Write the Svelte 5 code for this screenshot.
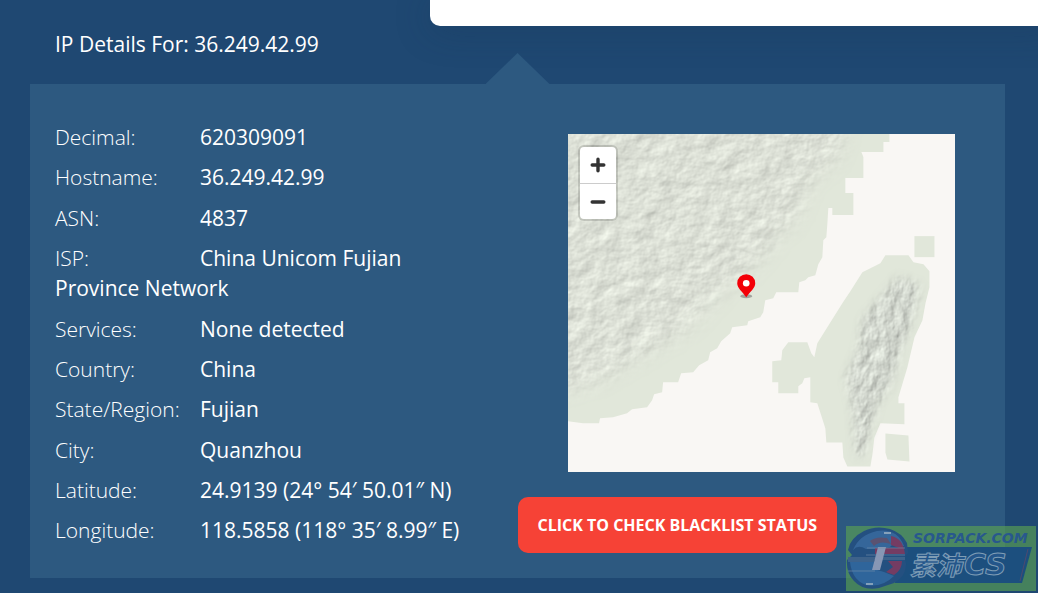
<script>
  const details = [
    ['Decimal', '620309091'],
    ['Hostname', '36.249.42.99'],
    ['ASN', '4837'],
    ['ISP', 'China Unicom Fujian Province Network'],
    ['Services', 'None detected'],
    ['Country', 'China'],
    ['State/Region', 'Fujian'],
    ['City', 'Quanzhou'],
    ['Latitude', '24.9139 (24° 54′ 50.01″ N)'],
    ['Longitude', '118.5858 (118° 35′ 8.99″ E)']
  ];
</script>

<main class="page">
  <div class="card"></div>
  <h1>IP Details For: 36.249.42.99</h1>

  <section class="panel">
    <ul class="details">
      {#each details as [label, value]}
        <li><span class="label">{label}:</span>{value}</li>
      {/each}
    </ul>

    <div class="side">
      <div class="map">
        <svg class="terrain" viewBox="0 0 387 338" preserveAspectRatio="xMidYMid slice" aria-hidden="true">
          <defs>
            <filter id="relief" x="0" y="0" width="387" height="338" filterUnits="userSpaceOnUse" color-interpolation-filters="sRGB">
              <feTurbulence type="fractalNoise" baseFrequency="0.05 0.06" numOctaves="4" seed="12" result="n" />
              <feColorMatrix in="n" type="matrix" values="0 0 0 0 0  0 0 0 0 0  0 0 0 0 0  1 0 0 0 0" result="h" />
              <feDiffuseLighting in="h" surfaceScale="0.8" diffuseConstant="1.25" lighting-color="#dfe3d9" result="lit">
                <feDistantLight azimuth="225" elevation="52" />
              </feDiffuseLighting>
              <feComposite in="lit" in2="SourceAlpha" operator="in" />
            </filter>
            <filter id="ridge" x="240" y="110" width="147" height="228" filterUnits="userSpaceOnUse" color-interpolation-filters="sRGB">
              <feTurbulence type="fractalNoise" baseFrequency="0.08 0.05" numOctaves="4" seed="5" result="n" />
              <feColorMatrix in="n" type="matrix" values="0 0 0 0 0  0 0 0 0 0  0 0 0 0 0  1 0 0 0 0" result="h" />
              <feDiffuseLighting in="h" surfaceScale="1.2" diffuseConstant="1.22" lighting-color="#dadfd6" result="lit">
                <feDistantLight azimuth="225" elevation="52" />
              </feDiffuseLighting>
              <feComposite in="lit" in2="SourceAlpha" operator="in" />
            </filter>
            <filter id="soft" x="-10%" y="-10%" width="120%" height="120%"><feGaussianBlur stdDeviation="9" /></filter>
            <filter id="softer" x="-20%" y="-10%" width="140%" height="120%"><feGaussianBlur stdDeviation="4" /></filter>
            <mask id="inland" maskUnits="userSpaceOnUse" x="0" y="0" width="387" height="338">
              <path filter="url(#soft)" fill="#fff" d="M-30-30H285L270 25 242 50 228 85 205 110 188 132 162 152 140 174 118 197 95 210 52 236 25 250-30 262Z" />
            </mask>
            <mask id="range" maskUnits="userSpaceOnUse" x="240" y="110" width="147" height="228">
              <path filter="url(#softer)" fill="#fff" d="M330 142 352 150 346 180 334 215 323 250 310 270 301 300 295 322H287L284 275 277 245 289 215 294 185 310 165Z" />
            </mask>
          </defs>
          <rect width="387" height="338" fill="#f9f7f4" />
          <g fill="#e1e7da">
            <path d="M0 0H321V8H315V18H293L295 23V44H277V59H285V81H264V74H260L259 90 258 103 255 106 254 123 250 130 247 141 240 143 237 146 231 148 230 158H208L205 164 197 166 195 178 192 183 180 187 179 191 164 193 162 199 153 207 149 214 142 218 140 226 131 231 125 238 113 239 110 248H95L94 258 86 260 84 266 79 273 64 275 59 279 45 283 32 284 31 289H15L0 287Z" />
            <path d="M317 121H340L345 128 355 130 361 137V153L357 169 354 186 346 203 339 233 330 263V269H336V290L312 289 306 303 304 320 302 332H279L275 323 274 308H258L257 294 249 269 242 268V243L236 244 234 249 230 252V259H210V248H204V227L213 226 214 216 220 208H239L243 219 246 223 249 209 274 169 282 157 294 138 304 133 312 129Z" />
            <path d="M317 299 340 301 341 327 319 325 317 318Z" />
            <path d="M346 102H366V123H346Z" />
          </g>
          <g mask="url(#inland)"><rect width="387" height="338" filter="url(#relief)" /></g>
          <g mask="url(#range)"><rect x="240" y="110" width="147" height="228" filter="url(#ridge)" /></g>
          <ellipse cx="178" cy="162" rx="6" ry="2" fill="#777" opacity=".6" />
          <path fill="#f30008" d="M178 140a9 9 0 0 0-9 9c0 5 5 8 9 14 4-6 9-9 9-14a9 9 0 0 0-9-9Z" />
          <circle cx="178" cy="149" r="3.3" fill="#fff" />
        </svg>
        <div class="zoom">
          <button type="button" aria-label="Zoom in">
            <svg viewBox="0 0 16 16"><path d="M8 2.2V13.8M2.2 8H13.8" /></svg>
          </button>
          <button type="button" aria-label="Zoom out">
            <svg viewBox="0 0 16 16"><path d="M2.2 8H13.8" /></svg>
          </button>
        </div>
      </div>
      <button class="check" type="button">CLICK TO CHECK BLACKLIST STATUS</button>
    </div>
  </section>

  <svg class="stamp" viewBox="0 0 190 65">
    <rect width="190" height="65" fill="#5aa052" opacity=".66" />
    <path d="M54 21H186L176 57H49Z" fill="#174982" opacity=".9" />
    <path d="M182 23 174 55" stroke="#80445f" opacity=".5" />
    <g>
      <path d="M18 5Q30-1 44 3 56 7 61 17L62 27 58 31 60 37Q61 50 48 57L33 62Q17 65 8 55 0 47 1 34L6 29 2 24Q4 12 18 5Z" fill="#245080" />
      <path d="M7 24Q13 9 31 5 51 2 58 20L51 21Q48 16 44 21L35 23H20Q12 18 7 24Z" fill="#35669a" />
      <path d="M24 15Q30 10 41 12L45 18Q34 14 28 20Z" fill="#5a5271" />
      <path d="M45 10Q57 12 59 28H29V22H53L45 19Z" fill="#743c63" />
      <path d="M2 31H59V34H2Z" fill="#3d628a" />
      <path d="M42 35H56Q56 44 48 49L40 46 47 41Z" fill="#743c63" />
      <path d="M4 36H28V43L38 46 48 50Q36 62 20 59 6 54 4 36Z" fill="#2f659b" />
      <path d="M32 21H40L34 44H26Z" fill="#8797b5" />
      <path d="M21 22H59M20 29H31M38 29H59M2 45H29M2 35H28" fill="none" stroke="#7790aa" opacity=".6" />
      <path d="M38 7H45M20 58H27" stroke="#a9bbc8" stroke-width="2" opacity=".7" />
    </g>
    <text class="domain" x="67" y="17">SORPACK.COM</text>
    <text class="han" x="64" y="49">素沛</text>
    <text class="latin" x="118" y="49">CS</text>
  </svg>
</main>

<style>
  :global(body) { margin: 0; background: #1f4872; }
  .page {
    position: relative;
    min-height: 100vh;
    box-sizing: border-box;
    padding-bottom: 15px;
    overflow: hidden;
    color: #fff;
    font-family: "Open Sans", "Noto Sans", sans-serif;
    font-size: 21px;
    line-height: 30px;
  }
  .card {
    height: 26px;
    margin: 0 -20px 0 430px;
    border-radius: 0 0 0 10px;
    background: #fff;
    box-shadow: 0 4px 36px rgba(20, 50, 80, .3);
  }
  h1 {
    margin: 3px 55px 25px;
    font: inherit;
  }
  .panel {
    position: relative;
    display: grid;
    grid-template-columns: 1fr 1fr;
    margin: 0 33px 0 30px;
    padding: 38px 0 25px;
    background: #2d5980;
  }
  .panel::before {
    content: "";
    position: absolute;
    left: 50%;
    bottom: 100%;
    width: 64px;
    height: 31px;
    transform: translateX(-50%);
    background: #2d5980;
    clip-path: polygon(50% 0, 100% 100%, 0 100%);
  }
  .details {
    display: flex;
    flex-direction: column;
    justify-content: space-between;
    margin: 0 0 8px;
    padding: 0 30px 0 25px;
    list-style: none;
    font-weight: 500;
  }
  .label {
    display: inline-block;
    width: 145px;
    font-weight: 300;
  }
  .side {
    display: flex;
    flex-direction: column;
    align-items: flex-start;
    gap: 25px;
    padding-top: 12px;
  }
  .map {
    position: relative;
    align-self: stretch;
    margin: 0 50px;
    aspect-ratio: 387 / 338;
    overflow: hidden;
  }
  .terrain { display: block; width: 100%; height: 100%; }
  .zoom {
    position: absolute;
    left: 10px;
    top: 11px;
    border: 2px solid rgba(0, 0, 0, .14);
    border-radius: 6px;
    background: #fff;
    background-clip: padding-box;
  }
  .zoom button {
    display: grid;
    place-items: center;
    width: 36px;
    height: 36px;
    padding: 0;
    border: 0;
    background: none;
  }
  .zoom button + button { border-top: 1px solid #ccc; }
  .zoom svg { width: 16px; height: 16px; }
  .zoom path { fill: none; stroke: #333; stroke-width: 3.4; stroke-linecap: round; }
  .check {
    padding: 13px 20px;
    border: 0;
    border-radius: 10px;
    background: #f64236;
    color: #fff;
    font: 700 16px/30px "Open Sans", sans-serif;
  }
  .stamp {
    position: absolute;
    right: 2px;
    bottom: 2px;
    width: 190px;
    height: 65px;
  }
  .domain { font: italic 700 14px "DejaVu Sans", sans-serif; fill: #28588d; }
  .han { font: italic 700 26px "Noto Sans CJK SC", sans-serif; }
  .latin { font: italic 700 30px "DejaVu Sans", sans-serif; }
  .han, .latin { fill: #24568a; stroke: #7f9db5; stroke-width: 1px; }
</style>
